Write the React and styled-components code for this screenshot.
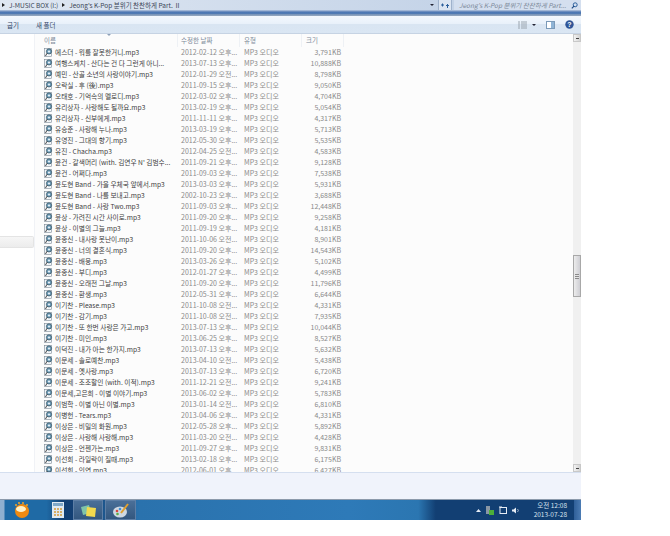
import styled, { createGlobalStyle } from 'styled-components'

const songs = [
  ['에스더 - 뭐를 잘못한거니.mp3', '2012-02-12 오후...', '3,791KB'],
  ['여행스케치 - 산다는 건 다 그런게 아니...', '2013-07-13 오후...', '10,888KB'],
  ['예민 - 산골 소년의 사랑이야기.mp3', '2012-01-29 오전...', '8,798KB'],
  ['오락실 - 후 (後).mp3', '2011-09-15 오후...', '9,050KB'],
  ['오태호 - 기억속의 멜로디.mp3', '2012-03-02 오후...', '4,704KB'],
  ['유리상자 - 사랑해도 될까요.mp3', '2013-02-19 오후...', '5,054KB'],
  ['유리상자 - 신부에게.mp3', '2011-11-11 오후...', '4,317KB'],
  ['유승준 - 사랑해 누나.mp3', '2013-03-19 오후...', '5,713KB'],
  ['유영진 - 그대의 향기.mp3', '2012-05-30 오후...', '5,535KB'],
  ['유진 - Chacha.mp3', '2012-04-25 오전...', '4,583KB'],
  ['윤건 - 갈색머리 (with. 김연우 N\' 김범수...', '2011-09-21 오후...', '9,128KB'],
  ['윤건 - 어쩌다.mp3', '2011-09-03 오후...', '7,538KB'],
  ['윤도현 Band - 가을 우체국 앞에서.mp3', '2013-03-03 오후...', '5,931KB'],
  ['윤도현 Band - 나를 보내고.mp3', '2002-10-23 오후...', '3,688KB'],
  ['윤도현 Band - 사랑 Two.mp3', '2011-09-03 오후...', '12,448KB'],
  ['윤상 - 가려진 시간 사이로.mp3', '2011-09-20 오후...', '9,258KB'],
  ['윤상 - 이별의 그늘.mp3', '2011-09-19 오후...', '4,181KB'],
  ['윤종신 - 내사랑 못난이.mp3', '2011-10-06 오전...', '8,901KB'],
  ['윤종신 - 너의 결혼식.mp3', '2011-09-20 오후...', '14,543KB'],
  ['윤종신 - 배웅.mp3', '2013-03-26 오후...', '5,102KB'],
  ['윤종신 - 부디.mp3', '2012-01-27 오후...', '4,499KB'],
  ['윤종신 - 오래전 그날.mp3', '2011-09-20 오후...', '11,796KB'],
  ['윤종신 - 환생.mp3', '2012-05-31 오후...', '6,644KB'],
  ['이기찬 - Please.mp3', '2011-10-08 오전...', '4,331KB'],
  ['이기찬 - 감기.mp3', '2011-10-08 오전...', '7,935KB'],
  ['이기찬 - 또 한번 사랑은 가고.mp3', '2013-07-13 오후...', '10,044KB'],
  ['이기찬 - 미인.mp3', '2013-06-25 오후...', '8,527KB'],
  ['이덕진 - 내가 아는 한가지.mp3', '2013-07-13 오후...', '5,632KB'],
  ['이문세 - 솔로예찬.mp3', '2013-04-10 오전...', '5,438KB'],
  ['이문세 - 옛사랑.mp3', '2013-07-13 오후...', '6,720KB'],
  ['이문세 - 조조할인 (with. 이적).mp3', '2011-12-21 오전...', '9,241KB'],
  ['이문세,고은희 - 이별 이야기.mp3', '2013-06-02 오후...', '5,783KB'],
  ['이범학 - 이별 아닌 이별.mp3', '2013-01-14 오전...', '6,810KB'],
  ['이병헌 - Tears.mp3', '2013-04-06 오후...', '4,331KB'],
  ['이상은 - 비밀의 화원.mp3', '2012-05-28 오후...', '5,892KB'],
  ['이상은 - 사랑해 사랑해.mp3', '2011-03-20 오전...', '4,428KB'],
  ['이상은 - 언젠가는.mp3', '2011-09-27 오후...', '9,831KB'],
  ['이선희 - 라일락이 질때.mp3', '2013-02-18 오후...', '6,175KB'],
  ['이선희 - 인연.mp3', '2012-06-01 오후...', '6,427KB'],
]

const Global = createGlobalStyle`
  html, body { margin: 0; background: #fff; }
  body { font-family: "Noto Sans CJK KR", "Liberation Sans", sans-serif; }
`

const Desktop = styled.div`
  width: 581px;
  height: 521px;
  display: flex;
  flex-direction: column;
  overflow: hidden;
`

const AddressFrame = styled.div`
  height: 16px;
  flex: none;
  display: flex;
  align-items: flex-start;
  background: linear-gradient(to bottom, #c4d3e7 0, #c4d3e7 10px, #7d99c4 11px, #3c6cae 13px, #8ea3bd 15px);
`

const Crumbs = styled.div`
  width: 437px;
  height: 10px;
  display: flex;
  align-items: center;
  gap: 4px;
  padding-left: 2px;
  box-sizing: border-box;
  background: linear-gradient(to right, #dfe7f2, #c5d4e8);
  font-size: 6.5px;
  color: #3a4656;
`

const Arrow = styled.span`
  width: 0;
  height: 0;
  border-left: 3px solid #222;
  border-top: 2px solid transparent;
  border-bottom: 2px solid transparent;
`

const DropButton = styled.div`
  width: 6px;
  height: 10px;
  margin-left: -7px;
  display: flex;
  align-items: center;
  &::after {
    content: '';
    border-top: 2px solid #223;
    border-left: 2px solid transparent;
    border-right: 2px solid transparent;
  }
`

const RefreshButton = styled.div`
  width: 12px;
  height: 10px;
  margin-left: 2px;
  background: #dbe5f2;
  border-left: 1px solid #9fb2cc;
  border-right: 1px solid #9fb2cc;
  display: flex;
  align-items: center;
  justify-content: center;
`

const SearchBox = styled.div`
  width: 127px;
  height: 10px;
  margin-left: 2px;
  display: flex;
  align-items: center;
  justify-content: space-between;
  padding: 0 3px 0 5px;
  box-sizing: border-box;
  background: #d4dfef;
  font-size: 6.5px;
  font-style: italic;
  color: #7a8798;
  white-space: nowrap;
`

const Toolbar = styled.div`
  height: 17px;
  flex: none;
  display: flex;
  align-items: center;
  padding: 0 7px;
  gap: 17px;
  background: linear-gradient(to bottom, #f3f8fd 0, #e9f1fa 45%, #d9e5f2 50%, #dae6f3 100%);
  border-bottom: 1px solid #c6d3e3;
  font-size: 6.5px;
  color: #33496a;
`

const ToolIcons = styled.div`
  margin-left: auto;
  display: flex;
  align-items: center;
`

const ViewArrow = styled.span`
  margin: 0 10px 0 5px;
  border-top: 2px solid #223;
  border-left: 2px solid transparent;
  border-right: 2px solid transparent;
`

const Pane = styled.div`
  height: 438px;
  flex: none;
  display: flex;
  background: #fcfcfc;
`

const NavPane = styled.div`
  width: 35px;
  flex: none;
  display: flex;
  flex-direction: column;
  padding-top: 202px;
  background: #fff;
  border-right: 1px solid #f0f2f6;
  box-sizing: border-box;
`

const NavHighlight = styled.div`
  width: 33px;
  height: 10px;
  background: linear-gradient(to bottom, #f6f6f6, #ececec);
  border: solid #e4e4e4;
  border-width: 1px 1px 1px 0;
  border-radius: 0 2px 2px 0;
`

const FileList = styled.div`
  flex: 1;
  min-width: 0;
  overflow: hidden;
`

const HeaderRow = styled.div`
  height: 12px;
  display: grid;
  grid-template-columns: 143px 62px 62px 42px;
  font-size: 6.5px;
  color: #7d8a9a;
  line-height: 12px;
  margin-bottom: 1px;
`

const HeaderCell = styled.div`
  position: relative;
  border-right: 1px solid #eef1f5;
  height: 13px;
  box-sizing: border-box;
  padding-left: ${p => p.$pad}px;
`

// the little sort caret sits on the header's top edge
const SortCaret = styled.span`
  position: absolute;
  left: 72px;
  top: 0;
  border-top: 2px solid #8da0b8;
  border-left: 2px solid transparent;
  border-right: 2px solid transparent;
`

const Row = styled.div`
  height: 11px;
  display: grid;
  grid-template-columns: 143px 62px 62px 42px;
  align-items: center;
  line-height: 11px;
  white-space: nowrap;
`

const NameCell = styled.div`
  display: flex;
  align-items: center;
  gap: 2px;
  padding-left: 9px;
  font-size: 6.7px;
  color: #3c3c3c;
`

const InfoCell = styled.div`
  font-size: 7px;
  color: #8a8a8a;
  padding-left: ${p => p.$pad || 0}px;
  padding-right: ${p => p.$right ? 3 : 0}px;
  text-align: ${p => p.$right ? 'right' : 'left'};
`

const ScrollBar = styled.div`
  width: 8px;
  flex: none;
  display: flex;
  flex-direction: column;
  background: #f0f0f0;
`

const ScrollEnd = styled.div`
  height: 8px;
  margin-top: ${p => p.$bottom ? 'auto' : '0'};
  background: linear-gradient(to right, #f2f2f2, #d4d4d4);
  border: 1px solid #c8c8c8;
  box-sizing: border-box;
  display: flex;
  align-items: center;
  justify-content: center;
  &::after {
    content: '';
    width: 3px;
    height: 1px;
    background: #444;
  }
`

const ScrollThumb = styled.div`
  height: 42px;
  margin-top: 213px;
  background: linear-gradient(to right, #ececec, #cfcfd4);
  border: 1px solid #a8a8a8;
  box-sizing: border-box;
  display: flex;
  align-items: center;
  justify-content: center;
  &::after {
    content: '';
    width: 4px;
    height: 5px;
    background: repeating-linear-gradient(to bottom, #8a8a8a 0, #8a8a8a 1px, #e4e4e4 1px, #e4e4e4 2px);
  }
`

const StatusBar = styled.div`
  height: 27px;
  flex: none;
  background: #f0f3fb;
  border-top: 1px solid #d5dfef;
  box-sizing: border-box;
`

const Taskbar = styled.div`
  height: 21px;
  flex: none;
  display: flex;
  align-items: center;
  background: linear-gradient(to right, #8fb0d0 0, #8fb0d0 4px, #1f6aa5 5px, #1f6aa5 8%, #123f73 11%, #123f73 13%, #2a72ad 24%, #2e7ab8 60%, #2b76b1 72%, #123f73 75%, #123f73 100%);
  border-top: 1px solid #8c9aab;
  box-sizing: border-box;
`

const StartOrb = styled.div`
  width: 44px;
  height: 20px;
  flex: none;
  display: flex;
  align-items: center;
  justify-content: center;
`

const TaskButton = styled.div`
  width: ${p => p.$w}px;
  height: 20px;
  flex: none;
  margin-right: 2px;
  display: flex;
  align-items: center;
  justify-content: center;
  box-sizing: border-box;
  background: ${p => p.$active ? 'linear-gradient(to bottom, #4a6f98, #33577f)' : 'transparent'};
  border: ${p => p.$active ? '1px solid #5d7ea5' : 'none'};
`

const Tray = styled.div`
  margin-left: auto;
  display: flex;
  align-items: center;
  gap: 5px;
`

const Clock = styled.div`
  width: 40px;
  font-size: 6.5px;
  line-height: 9px;
  color: #d6e2ee;
  text-align: right;
  margin-left: 2px;
`

const ShowDesktop = styled.div`
  width: 7px;
  height: 20px;
  margin-left: 7px;
  background: linear-gradient(to right, #2f5f98, #4c7cb4);
`

const MusicIcon = () => (
  <svg width="9" height="9" viewBox="0 0 9 9">
    <rect x="0.5" y="0.5" width="7" height="8" fill="#f4f7fa" stroke="#7a8894" strokeWidth="0.6" />
    <circle cx="5" cy="3.4" r="2.6" fill="#6d9cb8" stroke="#24404f" strokeWidth="0.6" />
    <circle cx="5" cy="3.4" r="1" fill="#f0f6fa" />
    <path d="M1.5 8 L3 5.200" stroke="#333" strokeWidth="0.9" />
  </svg>
)

const Orb = () => (
  <svg width="20" height="20" viewBox="0 0 20 20">
    <circle cx="10" cy="11" r="7" fill="#f08a10" />
    <ellipse cx="9" cy="9" rx="5" ry="3" fill="#fff1c8" />
    <circle cx="4" cy="5" r="1" fill="#f4a524" />
    <circle cx="7" cy="3" r="1" fill="#f4a524" />
    <circle cx="11" cy="3" r="1" fill="#f4a524" />
    <circle cx="15" cy="5" r="1" fill="#f4a524" />
  </svg>
)

const App = () => (
  <Desktop>
    <Global />
    <AddressFrame>
      <Crumbs>
        <Arrow />
        <span>J-MUSIC BOX (I:)</span>
        <Arrow />
        <span>Jeong's K-Pop 분위기 찬찬하게 Part. Ⅱ</span>
      </Crumbs>
      <DropButton />
      <RefreshButton>
        <svg width="8" height="7" viewBox="0 0 8 7">
          <path d="M0 3h3M1.5 1.5v3M5 3.5h3M6.500 2v4" stroke="#2b5f9c" strokeWidth="1" />
        </svg>
      </RefreshButton>
      <SearchBox>
        <span>Jeong's K-Pop 분위기 찬찬하게 Part...</span>
        <svg width="7" height="7" viewBox="0 0 7 7">
          <circle cx="4.2" cy="2.8" r="2" fill="none" stroke="#2b5f9c" strokeWidth="1" />
          <path d="M3 4.2 L0.8 6.4" stroke="#1c4a85" strokeWidth="1.2" />
        </svg>
      </SearchBox>
    </AddressFrame>
    <Toolbar>
      <span>굽기</span>
      <span>새 폴더</span>
      <ToolIcons>
        <svg width="9" height="8" viewBox="0 0 9 8">
          <path d="M0 1h2M3 1h6M0 3h2M3 3h6M0 5h2M3 5h6M0 7h2M3 7h6" stroke="#9aa4ae" strokeWidth="1" />
        </svg>
        <ViewArrow />
        <svg width="9" height="8" viewBox="0 0 9 8">
          <rect x="0.5" y="0.5" width="8" height="7" fill="#fff" stroke="#7b9ab8" />
          <rect x="5" y="1" width="3" height="6" fill="#8fb4d6" />
        </svg>
        <svg width="9" height="9" viewBox="0 0 9 9" style={{ marginLeft: 10 }}>
          <circle cx="4.5" cy="4.5" r="4.2" fill="#2f5597" />
          <text x="4.5" y="7" fontSize="7" fontWeight="700" textAnchor="middle" fill="#fff" fontFamily="Liberation Sans">?</text>
        </svg>
      </ToolIcons>
    </Toolbar>
    <Pane>
      <NavPane>
        <NavHighlight />
      </NavPane>
      <FileList>
        <HeaderRow>
          <HeaderCell $pad={9}>이름<SortCaret /></HeaderCell>
          <HeaderCell $pad={3}>수정한 날짜</HeaderCell>
          <HeaderCell $pad={4}>유형</HeaderCell>
          <HeaderCell $pad={4}>크기</HeaderCell>
        </HeaderRow>
        {songs.map(([name, date, size]) => (
          <Row key={name}>
            <NameCell><MusicIcon />{name}</NameCell>
            <InfoCell $pad={3}>{date}</InfoCell>
            <InfoCell $pad={4}>MP3 오디오</InfoCell>
            <InfoCell $right>{size}</InfoCell>
          </Row>
        ))}
      </FileList>
      <ScrollBar>
        <ScrollEnd />
        <ScrollThumb />
        <ScrollEnd $bottom />
      </ScrollBar>
    </Pane>
    <StatusBar />
    <Taskbar>
      <StartOrb><Orb /></StartOrb>
      <TaskButton $w={27}>
        <svg width="12" height="16" viewBox="0 0 12 16">
          <rect width="12" height="16" fill="#dfe9f2" />
          <rect x="1" y="1" width="10" height="3" fill="#7fa8c8" />
          <path d="M2 7h2M5 7h2M8 7h2M2 10h2M5 10h2M8 10h2M2 13h2M5 13h2M8 13h2" stroke="#d49a3a" strokeWidth="1.5" />
        </svg>
      </TaskButton>
      <TaskButton $w={30} $active>
        <svg width="17" height="13" viewBox="0 0 17 13">
          <path d="M1 3l8-2 2 8-8 2z" fill="#7fc4a8" />
          <path d="M7 3l9 1-1 9-9-1z" fill="#f2d94e" />
        </svg>
      </TaskButton>
      <TaskButton $w={31} $active>
        <svg width="18" height="15" viewBox="0 0 18 15">
          <ellipse cx="8" cy="9" rx="7" ry="5.5" fill="#cfd8e2" />
          <circle cx="5" cy="8" r="1.3" fill="#d9463d" />
          <circle cx="8" cy="6" r="1.3" fill="#3f8fd6" />
          <circle cx="5.5" cy="11" r="1.3" fill="#5dae4a" />
          <path d="M9 10 L16 1" stroke="#e0a030" strokeWidth="2" />
        </svg>
      </TaskButton>
      <Tray>
        <svg width="5" height="3" viewBox="0 0 5 3"><path d="M0 3L2.500 0L5 3z" fill="#e6edf5" /></svg>
        <svg width="8" height="9" viewBox="0 0 8 9">
          <rect x="0" y="0" width="4" height="8" fill="#8a97a5" />
          <rect x="3" y="4" width="5" height="5" fill="#4caf3a" />
        </svg>
        <svg width="8" height="8" viewBox="0 0 8 8">
          <rect x="1" y="1.500" width="6.500" height="6" fill="none" stroke="#e6edf5" strokeWidth="1" />
          <path d="M0 1h3" stroke="#e6edf5" strokeWidth="1" />
        </svg>
        <svg width="8" height="7" viewBox="0 0 8 7">
          <path d="M0 2.500h1.500L4 0.500v6L1.500 4.500H0z" fill="#e6edf5" />
          <path d="M5.500 2a2 2 0 0 1 0 3" stroke="#c0ccd8" strokeWidth="0.8" fill="none" />
        </svg>
        <Clock>
          <div>오전 12:08</div>
          <div>2013-07-28</div>
        </Clock>
      </Tray>
      <ShowDesktop />
    </Taskbar>
  </Desktop>
)

export default App
